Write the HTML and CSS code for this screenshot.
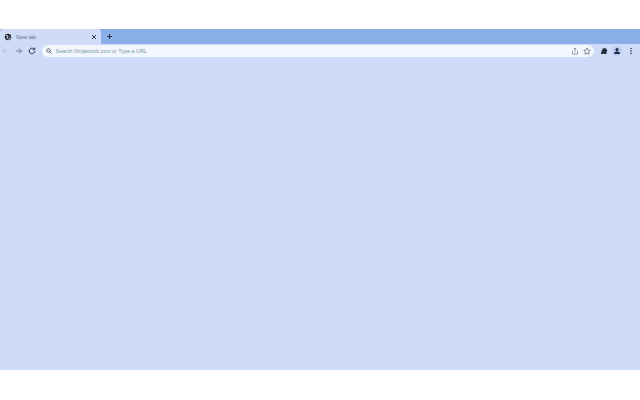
FILE: index.html
```html
<!DOCTYPE html>
<html>
<head>
<meta charset="utf-8">
<title>New tab</title>
<link rel="stylesheet" href="styles.css">
</head>
<body>
<div class="browser">
  <div class="tabstrip">
    <div class="tab">
      <svg class="favicon" viewBox="0 0 8 8"><circle cx="4" cy="4" r="3.2" fill="#2b3038"/><path d="M2 2.2 4 3.4 3 5.6M6 4.6 4.6 6.6" stroke="#e8edf8" stroke-width="1" fill="none"/></svg>
      <span class="tab-title">New tab</span>
      <svg class="close" viewBox="0 0 6 6"><path d="M1 1 5 5M5 1 1 5" stroke="#3c4350" stroke-width="1"/></svg>
    </div>
    <svg class="plus" viewBox="0 0 7 7"><path d="M3.5 1v5M1 3.5h5" stroke="#26324a" stroke-width="1"/></svg>
  </div>
  <div class="toolbar">
    <svg class="nav" viewBox="0 0 8 8"><path d="M7 4H1.500M4 1.500 1.500 4 4 6.500" stroke="#b4bccd" stroke-width=".9" fill="none"/></svg>
    <svg class="nav" viewBox="0 0 8 8"><path d="M1 4h5.500M4 1.500 6.500 4 4 6.500" stroke="#6d7685" stroke-width=".9" fill="none"/></svg>
    <svg class="nav" viewBox="0 0 8 8"><path d="M6.800 4A2.800 2.800 0 1 1 5.800 1.800M6.800 .6v2H4.800" stroke="#2f3640" stroke-width="1" fill="none"/></svg>
    <div class="omnibox">
      <svg class="search" viewBox="0 0 6 6"><circle cx="2.500" cy="2.500" r="1.700" stroke="#3c4350" stroke-width=".8" fill="none"/><path d="M3.800 3.800 5.500 5.500" stroke="#3c4350" stroke-width=".8"/></svg>
      <span class="url">Search Ninjastock.com or Type a URL</span>
      <svg class="omni-icon" viewBox="0 0 8 8"><path d="M1.500 4v3h5V4M4 5V1M2.700 2.300 4 1l1.300 1.300" stroke="#6d7685" stroke-width=".7" fill="none"/></svg>
      <svg class="omni-icon" viewBox="0 0 8 8"><path d="M4 1 5 3.100 7.200 3.400 5.600 5 6 7.200 4 6.100 2 7.200 2.400 5 .8 3.400 3 3.100Z" stroke="#5a6372" stroke-width=".7" fill="none"/></svg>
    </div>
    <div class="actions">
      <svg class="action" viewBox="0 0 8 8"><path d="M1 3h1.500V1.500h1.200a.7.700 0 0 1 1.300 0H6.500V3a.8.800 0 0 1 0 1.600V7H4.600a.8.800 0 0 0-1.400 0H1V5a.8.800 0 0 0 0-2Z" fill="#232a38"/></svg>
      <span class="profile"><svg class="action" viewBox="0 0 8 8"><circle cx="4" cy="2.600" r="1.500" fill="#1c2a4a"/><path d="M1.200 7V6c0-1 1.400-1.500 2.800-1.500S6.800 5 6.800 6v1Z" fill="#1c2a4a"/></svg></span>
      <svg class="action" viewBox="0 0 8 8"><circle cx="4" cy="1.500" r=".8" fill="#2a3140"/><circle cx="4" cy="4" r=".8" fill="#2a3140"/><circle cx="4" cy="6.500" r=".8" fill="#2a3140"/></svg>
    </div>
  </div>
  <div class="page"></div>
</div>
</body>
</html>
```
FILE: styles.css
```css
html, body {
  margin: 0;
  height: 100%;
  background: #fff;
}
.browser {
  height: 400px;
  padding: 29px 0 30px;
  box-sizing: border-box;
  display: flex;
  flex-direction: column;
}
.tabstrip {
  height: 15px;
  flex: none;
  background: #8aaee8;
  display: flex;
  align-items: center;
}
.tab {
  width: 101px;
  height: 15px;
  box-sizing: border-box;
  padding: 0 4px;
  display: flex;
  align-items: center;
  background: #d0dcf7;
  border-radius: 3px 3px 0 0;
}
.favicon {
  width: 8px;
  height: 8px;
  flex: none;
}
.tab-title {
  margin-left: 4px;
  flex: 1;
  font: 5.500px "Liberation Sans", sans-serif;
  color: #6a7488;
}
.close {
  width: 6px;
  height: 6px;
}
.plus {
  width: 7px;
  height: 7px;
  margin-left: 5px;
}
.toolbar {
  height: 14px;
  flex: none;
  background: #d0dcf7;
  display: flex;
  align-items: center;
  padding-left: 1px;
  gap: 5.500px;
}
.nav {
  width: 8px;
  height: 8px;
  flex: none;
}
.omnibox {
  width: 552px;
  height: 12px;
  box-sizing: border-box;
  background: #f3f6fd;
  border-radius: 6px;
  display: flex;
  align-items: center;
  padding: 0 3px 0 4px;
  gap: 4px;
}
.search {
  width: 6px;
  height: 6px;
  flex: none;
}
.url {
  flex: 1;
  font: 5.400px "Liberation Sans", sans-serif;
  color: #7a9aa8;
  white-space: nowrap;
}
.omni-icon {
  width: 8px;
  height: 8px;
  flex: none;
}
.actions {
  display: flex;
  align-items: center;
  gap: 4.500px;
  margin-left: 0.500px;
}
.action {
  width: 8px;
  height: 8px;
  display: block;
}
.profile {
  background: #bccdf0;
  border-radius: 50%;
  padding: 1px;
}
.page {
  flex: 1;
  background: #d0dcf7;
}
```
